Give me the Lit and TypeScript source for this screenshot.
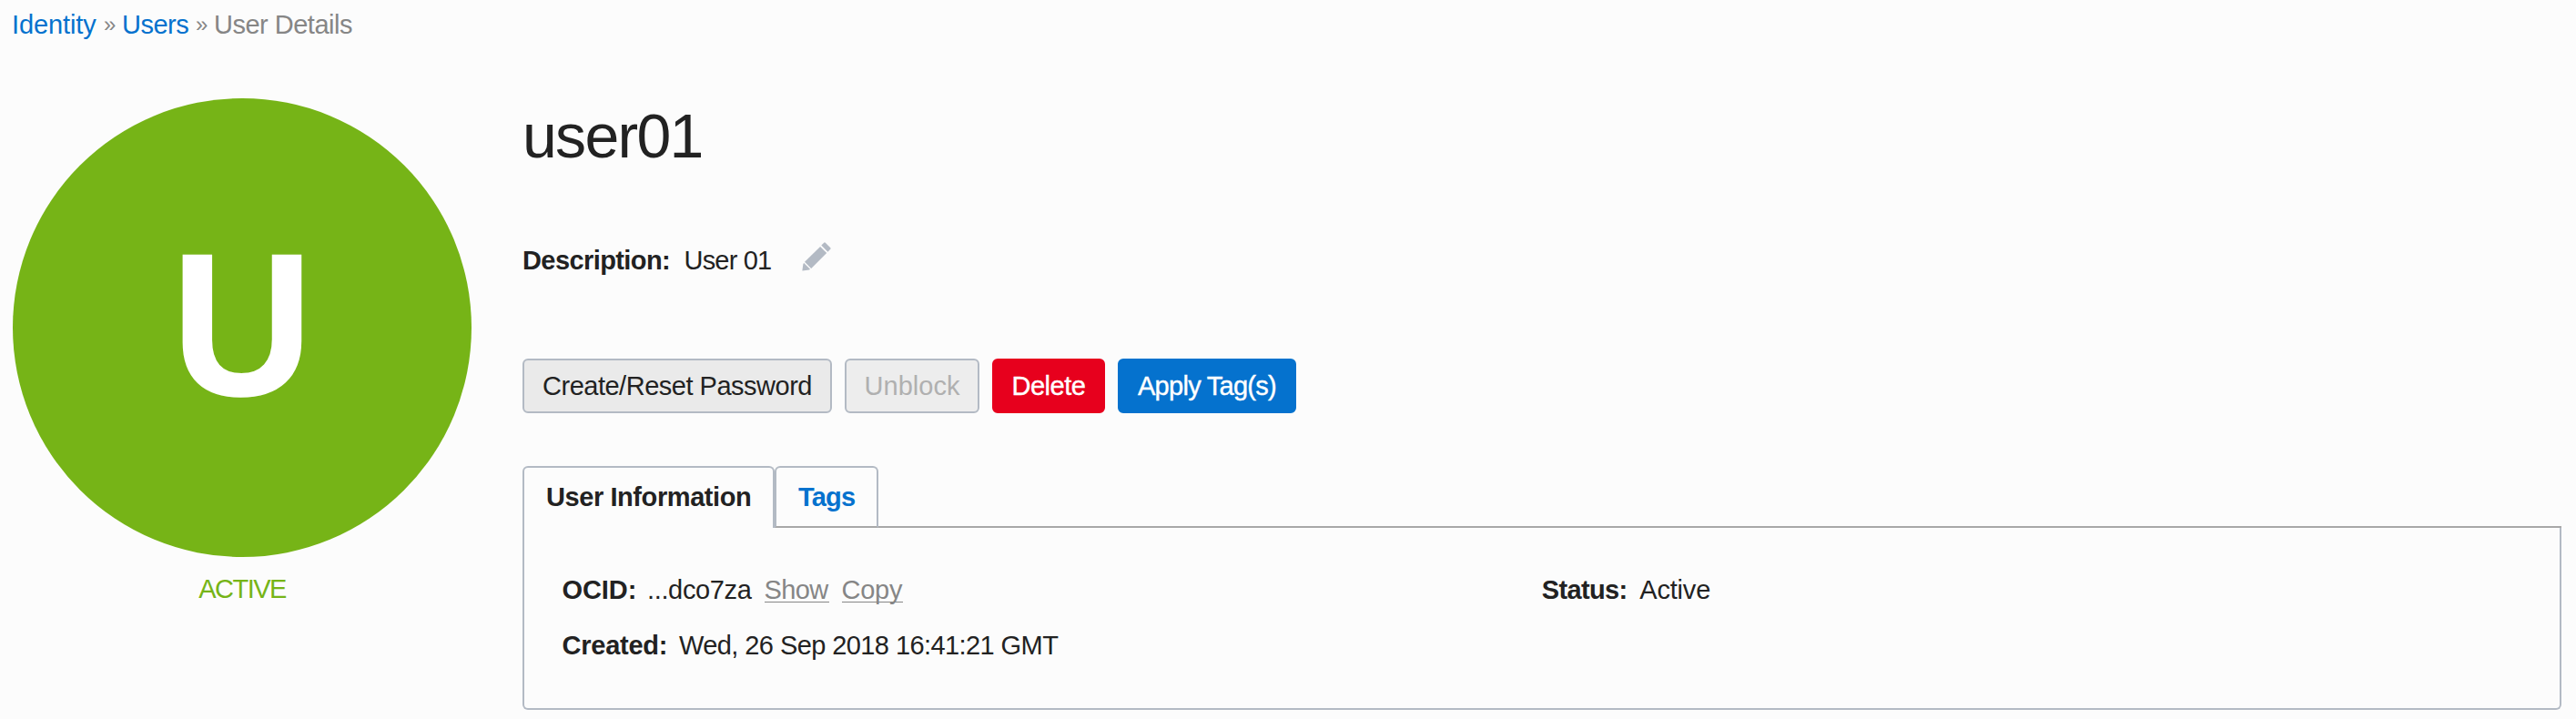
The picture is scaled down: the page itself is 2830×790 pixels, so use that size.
import { LitElement, html, css } from "lit";
import { customElement } from "lit/decorators.js";

@customElement("user-avatar")
class UserAvatar extends LitElement {
  static styles = css`
    :host { display: block; width: 504px; flex: none; }
    .circle { height: 504px; border-radius: 50%; background: #76b417; color: #fff; text-align: center; }
    .letter { display: block; font-size: 223px; font-weight: 700; line-height: 498px; transform: scaleX(0.963); -webkit-text-stroke: 1.5px #fff; }
    .state { margin-top: 18px; color: #76b417; text-align: center; letter-spacing: -1.5px; }
  `;
  render() {
    return html`<div class="circle"><span class="letter">U</span></div><div class="state">ACTIVE</div>`;
  }
}

@customElement("info-panel")
class InfoPanel extends LitElement {
  static styles = css`
    :host { display: block; width: 2240px; }
    * { box-sizing: border-box; }
    .tabs { display: flex; height: 68px; }
    .tab { height: 68px; padding-top: 15px; border: 2px solid #b3bac4; border-radius: 6px 6px 0 0; font-weight: 700; white-space: nowrap; }
    .info { width: 277px; padding-left: 24px; border-bottom: 0; letter-spacing: -0.42px; }
    .tags { width: 114px; padding-left: 24px; border-bottom-color: #a8a8a8; color: #0572ce; letter-spacing: -0.8px; }
    .rest { flex: 1; border-bottom: 2px solid #a8a8a8; }
    .body { display: grid; grid-template-columns: 1076.3px 1fr; row-gap: 27px; align-content: start; height: 200px; padding: 51px 0 0 41.5px; border: 2px solid #b3bac4; border-top: 0; border-radius: 0 0 6px 6px; }
    .row { display: grid; white-space: nowrap; height: 34px; }
    .ocid { grid-template-columns: 93.5px 128.5px auto 1fr; }
    .created { grid-template-columns: 128.5px 1fr; letter-spacing: -0.58px; }
    .status { grid-template-columns: 107.5px 1fr; }
    .key { font-weight: 700; letter-spacing: -0.08px; }
    .created .key { letter-spacing: -0.24px; }
    .status .key { letter-spacing: -0.64px; }
    .id { letter-spacing: -0.35px; }
    .act { letter-spacing: -0.2px; }
    .link { width: 71px; height: 31px; margin-right: 14px; color: #868686; border-bottom: 1px solid #868686; letter-spacing: -0.6px; }
    .copy { width: 67px; letter-spacing: -0.25px; }
  `;
  render() {
    return html`
      <div class="tabs">
        <div class="tab info">User Information</div>
        <div class="tab tags">Tags</div>
        <div class="rest"></div>
      </div>
      <div class="body">
        <div class="row ocid">
          <span class="key">OCID:</span><span class="id">...dco7za</span>
          <a class="link">Show</a><a class="link copy">Copy</a>
        </div>
        <div class="row status"><span class="key">Status:</span><span class="act">Active</span></div>
        <div class="row created"><span class="key">Created:</span><span>Wed, 26 Sep 2018 16:41:21 GMT</span></div>
      </div>`;
  }
}

@customElement("app-root")
class AppRoot extends LitElement {
  static styles = css`
    :host { display: block; height: 790px; overflow: hidden; background: #fcfcfc; color: #222; font: 29px/34px "Helvetica Neue", "Liberation Sans", Arial, sans-serif; }
    * { box-sizing: border-box; }
    .crumbs { display: grid; grid-template-columns: 101px 20px 81px 20px 1fr; height: 108px; padding: 10px 0 0 13px; color: #868686; white-space: nowrap; }
    .crumbs a { color: #0572ce; letter-spacing: -0.1px; }
    .crumbs .users { letter-spacing: -0.5px; }
    .sep { font-size: 24px; }
    .here { letter-spacing: -0.5px; }
    .main { display: flex; gap: 56px; padding-left: 14px; }
    .title { margin: 0; padding-top: 1px; height: 161px; font-size: 68px; line-height: 80px; font-weight: 400; letter-spacing: -1.7px; }
    .desc { display: grid; grid-template-columns: 177.5px 129.5px 32px; height: 125px; white-space: nowrap; letter-spacing: -0.8px; }
    .desc b { letter-spacing: -0.59px; }
    .pencil { display: block; width: 32px; height: 32px; margin-top: -3px; fill: #b3bac4; }
    .actions { display: flex; gap: 14px; height: 118px; }
    .btn { height: 60px; padding: 0; border: 2px solid #b3bac4; border-radius: 6px; background: #eaeaea; color: #222; font: inherit; line-height: 56px; text-align: center; white-space: nowrap; }
    .reset { width: 340px; letter-spacing: -0.49px; }
    .unblock { width: 148px; background: #ededed; color: #b0b0b0; }
    .delete { width: 124px; border-color: #e7001d; background: #e7001d; color: #fff; letter-spacing: -0.46px; }
    .apply { width: 196px; border-color: #0572ce; background: #0572ce; color: #fff; letter-spacing: -0.72px; }
    .delete, .apply { -webkit-text-stroke: 0.4px #fff; }
  `;
  render() {
    return html`
      <nav class="crumbs">
        <a>Identity</a><span class="sep">»</span><a class="users">Users</a><span class="sep">»</span><span class="here">User Details</span>
      </nav>
      <div class="main">
        <user-avatar></user-avatar>
        <section>
          <h1 class="title">user01</h1>
          <div class="desc">
            <b>Description:</b><span>User 01</span>
            <svg class="pencil" viewBox="0 0 32 32">
              <path d="M24.2 0.7Q25 0 25.8 0.7L31.3 6.2Q32 7 31.3 7.8L28.4 10.7L21.3 3.6Z" />
              <path d="M20.1 4.9L27.2 12L10.2 29L3 21.8Z" />
              <path d="M2.2 23L9 29.8L8 30.6L0.6 31.5Q0.3 31.4 0.4 31L1.4 23.9Z" />
            </svg>
          </div>
          <div class="actions">
            <button class="btn reset">Create/Reset Password</button>
            <button class="btn unblock" disabled>Unblock</button>
            <button class="btn delete">Delete</button>
            <button class="btn apply">Apply Tag(s)</button>
          </div>
          <info-panel></info-panel>
        </section>
      </div>`;
  }
}
